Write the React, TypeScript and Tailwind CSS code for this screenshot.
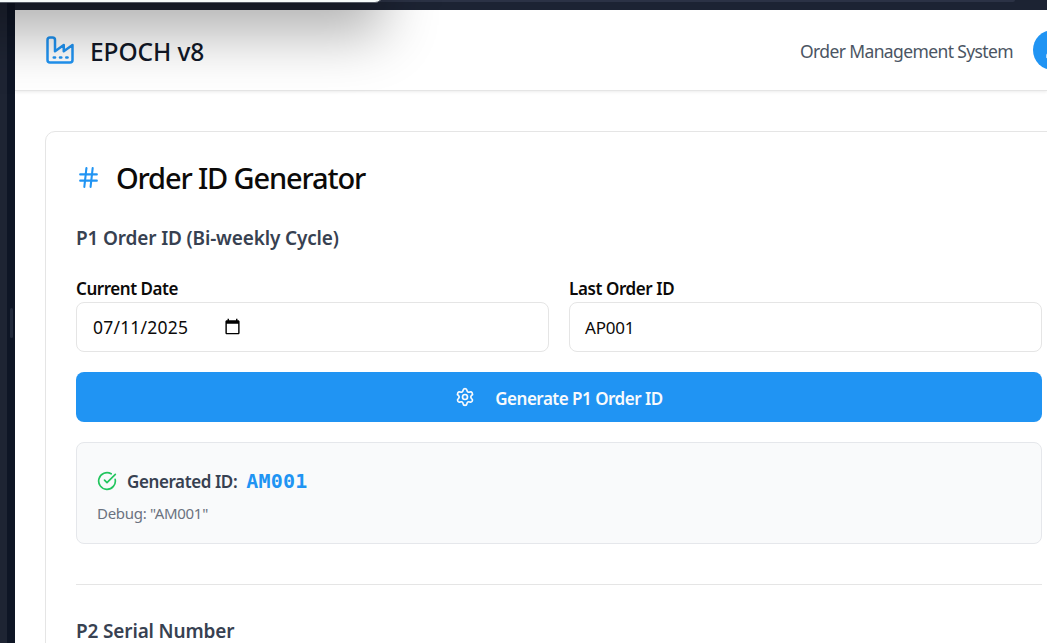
import { CircleCheckBig, Hash, Settings, User } from "lucide-react";
import type { ReactNode } from "react";

function Field({ label, labelClass, children }: { label: string; labelClass: string; children: ReactNode }) {
  return (
    <div className="flex flex-1 flex-col">
      <div className="flex h-[25px] items-center pb-[2px] text-[17px] font-semibold text-[#0c0a09]">
        <span className={labelClass}>{label}</span>
      </div>
      <div className="flex h-[50px] items-center rounded-[8px] border border-[#e5e5e5] bg-white px-4 text-[17px] text-[#0c0a09]">
        {children}
      </div>
    </div>
  );
}

function FactoryIcon() {
  return (
    <svg
      className="h-[30px] w-[30px] shrink-0 text-[#2094f3]"
      viewBox="0 0 24 24"
      fill="none"
      stroke="currentColor"
      strokeWidth="2"
      strokeLinecap="round"
      strokeLinejoin="round"
    >
      <path d="M2 20a2 2 0 0 0 2 2h16a2 2 0 0 0 2-2V8l-7 5V8l-7 5V4a2 2 0 0 0-2-2H4a2 2 0 0 0-2 2Z" />
      <path d="M17 18h1" />
      <path d="M12 18h1" />
      <path d="M7 18h1" />
    </svg>
  );
}

function CalendarIcon() {
  return (
    <svg className="ml-[36px] h-[17px] w-[17px] -translate-y-[1px]" viewBox="0 0 24 24" fill="#000">
      <path d="M20 3h-1V1h-2v2H7V1H5v2H4c-1.1 0-2 .9-2 2v16c0 1.1.9 2 2 2h16c1.1 0 2-.9 2-2V5c0-1.1-.9-2-2-2zm0 18H4V8h16v13z" />
    </svg>
  );
}

function Header() {
  return (
    <header className="flex h-[81px] shrink-0 items-center border-b border-[#e5e5e5] bg-white pl-[30px] shadow-[0_1px_3px_rgba(0,0,0,0.08)]">
      <FactoryIcon />
      <h1 className="ml-[15px] pt-[4px] text-[24.5px] font-medium whitespace-nowrap text-[#111827]">
        <span className="tracking-[-0.1px]">EPOCH v8</span>
      </h1>
      <div className="ml-auto flex shrink-0 items-center pt-[3px] text-[17.5px] whitespace-nowrap text-[#4b5563]">
        <span className="tracking-[-0.62px]">Order Management System</span>
      </div>
      <div className="-mr-[26px] ml-5 flex h-10 w-10 shrink-0 items-center justify-center rounded-full bg-[#2094f3]">
        <User className="h-5 w-5 text-white" />
      </div>
    </header>
  );
}

function GeneratorCard() {
  return (
    <section className="-mr-[30px] ml-[30px] flex h-[620px] flex-col rounded-[10px] border border-[#e5e5e5] bg-white py-[30px] pr-[34px] pl-[30px] whitespace-nowrap">
      <div className="flex h-[34px] items-center pb-[3px]">
        <Hash className="h-[25px] w-[25px] text-[#2094f3]" strokeWidth={2} />
        <h2 className="ml-[15px] text-[29px] leading-[34px] font-[540] text-[#0c0a09]">
          <span className="tracking-[-1.15px]">Order ID Generator</span>
        </h2>
      </div>
      <h3 className="mt-[28px] flex h-[28px] items-center text-[19px] font-semibold text-[#374151]">
        <span className="tracking-[-0.15px]">P1 Order ID (Bi-weekly Cycle)</span>
      </h3>
      <div className="mt-[25px] flex gap-5">
        <Field label="Current Date" labelClass="tracking-[-0.45px]">
          <span className="pt-[1px] text-[17.5px] tracking-[0.2px]">07/11/2025</span>
          <CalendarIcon />
        </Field>
        <Field label="Last Order ID" labelClass="tracking-[-0.4px]">
          <span className="-ml-px pt-[2px] tracking-[-0.2px]">AP001</span>
        </Field>
      </div>
      <button className="mt-5 flex h-[50px] shrink-0 items-center justify-center rounded-[8px] bg-[#2094f3] text-[17px] font-semibold text-[#f8fafc]">
        <Settings className="h-5 w-5" strokeWidth={2} />
        <span className="ml-5 pt-[3px] tracking-[-0.5px]">Generate P1 Order ID</span>
      </button>
      <div className="mt-5 h-[102px] shrink-0 rounded-[8px] border border-[#e5e7eb] bg-[#f9fafb] px-5 pt-[20px]">
        <div className="flex h-[35px] items-center">
          <CircleCheckBig className="h-5 w-5 text-[#22c55e]" strokeWidth={2} />
          <span className="ml-[10px] pt-[2px] text-[17px] font-semibold tracking-[-0.4px] text-[#374151]">Generated ID:</span>
          <span className="ml-[9px] font-['DejaVu_Sans_Mono',monospace] text-[20px] font-bold tracking-[0.2px] text-[#2094f3]">AM001</span>
        </div>
        <div className="mt-[5px] flex h-[20px] items-center text-[15px] text-[#6b7280]">
          <span className="tracking-[-0.3px]">Debug: "AM001"</span>
        </div>
      </div>
      <div className="mt-10 border-t border-[#e5e5e5]" />
      <h3 className="mt-[32px] flex h-[28px] shrink-0 items-center text-[19px] font-semibold text-[#374151]">
        <span className="tracking-[-0.15px]">P2 Serial Number</span>
      </h3>
    </section>
  );
}

export default function App() {
  return (
    <div className="relative flex h-screen w-screen overflow-hidden bg-[#1c2333] font-['Noto_Sans','Open_Sans',sans-serif]">
      <div className="w-[7px] shrink-0 bg-[#1e2433]" />
      <div className="mt-[3px] flex w-2 shrink-0 items-center justify-end bg-[#0e1525] pr-[2px]">
        <div className="h-[30px] w-[3px] rounded-full bg-[#222a3b]" />
      </div>
      <div className="flex min-w-0 flex-1 flex-col">
        <div className="flex h-[10px] shrink-0 flex-col bg-[#1c2333]">
          <div className="mr-[32px] h-[2px] rounded-br-[2px] bg-[#2b3245]" />
        </div>
        <main className="flex min-h-0 flex-1 flex-col overflow-hidden bg-white">
          <Header />
          <div className="pt-[40px]">
            <GeneratorCard />
          </div>
        </main>
      </div>
      <div className="pointer-events-none absolute -top-[300px] -left-[200px] h-[303px] w-[583px] rounded-br-[8px] border border-[#555b66] bg-[#f5fafa] shadow-[0_32px_56px_rgba(0,0,0,0.3)]" />
    </div>
  );
}
